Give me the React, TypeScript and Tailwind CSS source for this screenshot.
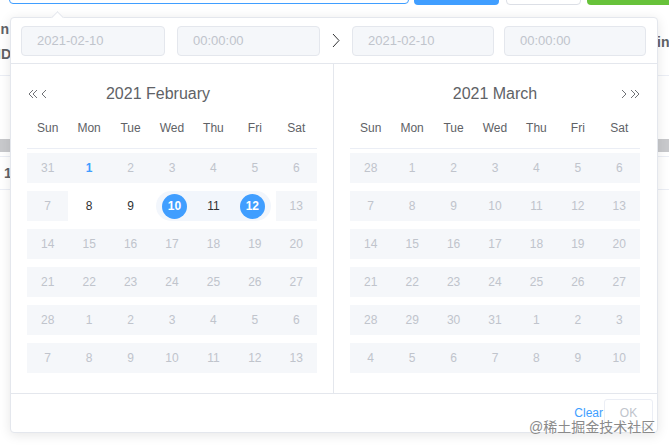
import React from "react";

type Kind = "off" | "normal" | "today" | "start" | "end" | "range";

interface Cell {
    d: number;
    kind: Kind;
}

const WEEK = ["Sun", "Mon", "Tue", "Wed", "Thu", "Fri", "Sat"];

const off = (nums: number[]): Cell[] => nums.map((d) => ({ d, kind: "off" as Kind }));

const FEB: Cell[] = [
    { d: 31, kind: "off" },
    { d: 1, kind: "today" },
    ...off([2, 3, 4, 5, 6]),
    { d: 7, kind: "off" },
    { d: 8, kind: "normal" },
    { d: 9, kind: "normal" },
    { d: 10, kind: "start" },
    { d: 11, kind: "range" },
    { d: 12, kind: "end" },
    { d: 13, kind: "off" },
    ...off([14, 15, 16, 17, 18, 19, 20]),
    ...off([21, 22, 23, 24, 25, 26, 27]),
    ...off([28, 1, 2, 3, 4, 5, 6]),
    ...off([7, 8, 9, 10, 11, 12, 13]),
];

const MAR: Cell[] = [
    ...off([28, 1, 2, 3, 4, 5, 6]),
    ...off([7, 8, 9, 10, 11, 12, 13]),
    ...off([14, 15, 16, 17, 18, 19, 20]),
    ...off([21, 22, 23, 24, 25, 26, 27]),
    ...off([28, 29, 30, 31, 1, 2, 3]),
    ...off([4, 5, 6, 7, 8, 9, 10]),
];

function DoubleChevron({ dir }: { dir: "left" | "right" }) {
    return (
        <svg width="10" height="10" viewBox="0 0 10 10" className={dir === "right" ? "rotate-180" : ""}>
            <path d="M5 1 L1 5 L5 9 M9 1 L5 5 L9 9" fill="none" stroke="#606266" strokeWidth="0.9" />
        </svg>
    );
}

function Chevron({ dir }: { dir: "left" | "right" }) {
    return (
        <svg width="6" height="10" viewBox="0 0 6 10" className={dir === "right" ? "rotate-180" : ""}>
            <path d="M5 1 L1 5 L5 9" fill="none" stroke="#606266" strokeWidth="0.9" />
        </svg>
    );
}

function DayCell({ cell }: { cell: Cell }) {
    const { d, kind } = cell;
    let box = "h-[30px] flex items-center justify-center";
    if (kind === "off" || kind === "today") box += " bg-[#f5f7fa]";
    if (kind === "range") box += " bg-[#f2f6fc]";
    if (kind === "start") box += " bg-[#f2f6fc] ml-[5px] rounded-l-[15px]";
    if (kind === "end") box += " bg-[#f2f6fc] mr-[5px] rounded-r-[15px]";

    let text = "text-[#c0c4cc]";
    if (kind === "normal" || kind === "range") text = "text-[#303133]";
    if (kind === "today") text = "text-[#409eff] font-bold";

    return (
        <div className="h-[38px] py-[4px]">
            <div className={box}>
                {kind === "start" || kind === "end" ? (
                    <span className="flex h-[25px] w-[25px] items-center justify-center rounded-full bg-[#409eff] text-white font-bold">
                        {d}
                    </span>
                ) : (
                    <span className={text}>{d}</span>
                )}
            </div>
        </div>
    );
}

function Month({ title, cells, side }: { title: string; cells: Cell[]; side: "left" | "right" }) {
    const isLeft = side === "left";
    return (
        <div className={`px-[16px] pt-[16px] pb-[16px] ${isLeft ? "w-[323px] border-r border-[#e4e7ed]" : "w-[322px]"}`}>
            <div className="relative flex h-[28px] items-center justify-center text-[16px] text-[#606266]">
                {isLeft && (
                    <div className="absolute left-[1px] flex items-center gap-[3px]">
                        <DoubleChevron dir="left" />
                        <Chevron dir="left" />
                    </div>
                )}
                <span className={isLeft ? "mr-[28px]" : ""}>{title}</span>
                {!isLeft && (
                    <div className="absolute right-0 flex items-center gap-[3px]">
                        <Chevron dir="right" />
                        <DoubleChevron dir="right" />
                    </div>
                )}
            </div>
            <div className="mt-[2px] w-[290px] text-[12px]">
                <div className="grid h-[39px] grid-cols-7 border-b border-[#ebeef5] pb-[2px] text-[#606266]">
                    {WEEK.map((w) => (
                        <div key={w} className="flex items-center justify-center">
                            {w}
                        </div>
                    ))}
                </div>
                <div className="grid grid-cols-7">
                    {cells.map((c, i) => (
                        <DayCell key={i} cell={c} />
                    ))}
                </div>
            </div>
        </div>
    );
}

function TimeInput({ value, w }: { value: string; w: string }) {
    return (
        <div className={`flex h-[30px] items-center rounded-[4px] border border-[#e4e7ed] bg-[#f5f7fa] pl-[15px] text-[13px] text-[#c0c4cc] ${w}`}>
            {value}
        </div>
    );
}

function Backdrop() {
    return (
        <div className="flex flex-col">
            {/* toolbar, only its lower edge shows */}
            <div className="-mt-[28px] flex h-[33px] items-start">
                <div className="ml-[9px] h-[32px] w-[400px] rounded-[4px] border border-[#409eff]" />
                <div className="ml-[5px] h-[33px] w-[85px] rounded-[4px] bg-[#409eff]" />
                <div className="ml-[7px] h-[33px] w-[75px] rounded-[4px] border border-[#dcdfe6]" />
                <div className="ml-[6px] h-[33px] flex-1 rounded-l-[4px] bg-[#67c23a]" />
            </div>
            <div className="flex h-[71px] border-b border-[#ebeef5] text-[14px] font-bold text-[#606266]">
                <div className="w-[11px] overflow-hidden">
                    <div className="mt-[14px] flex w-[60px] -translate-x-[51px] justify-end">Admin</div>
                    <div className="mt-[4px] flex w-[60px] -translate-x-[49px] justify-end">ID</div>
                </div>
                <div className="flex-1" />
                <div className="w-[12px] overflow-hidden pt-[27px]">in</div>
            </div>
            <div className="h-[63px]" />
            <div className="h-[13px] bg-[#c8c9cc]" />
            <div className="h-[5px] border-b border-[#ebeef5]" />
            <div className="flex h-[33px] items-center border-b border-[#ebeef5] pl-[4px] text-[14px] font-bold text-[#606266]">
                1
            </div>
        </div>
    );
}

export default function App() {
    return (
        <div
            className="relative h-[448px] w-[669px] overflow-hidden bg-white"
            style={{ fontFamily: '"Liberation Sans", Arial, "Noto Sans CJK SC", sans-serif' }}
        >
            <Backdrop />

            {/* date range popup */}
            <div className="absolute left-[10px] top-[17px] w-[648px] rounded-[4px] border border-[#e4e7ed] bg-white shadow-[0_2px_12px_rgba(0,0,0,0.1)]">
                <div className="absolute -top-[5px] left-[42px] h-[9px] w-[9px] rotate-45 border-l border-t border-[#e4e7ed] bg-white" />

                <div className="flex h-[46px] items-center border-b border-[#e4e7ed] pl-[10px]">
                    <TimeInput value="2021-02-10" w="w-[144px]" />
                    <div className="ml-[12px]">
                        <TimeInput value="00:00:00" w="w-[143px]" />
                    </div>
                    <div className="flex w-[32px] items-center justify-center">
                        <svg width="8" height="15" viewBox="0 0 8 15">
                            <path d="M1 1 L7 7.5 L1 14" fill="none" stroke="#303133" strokeWidth="1" />
                        </svg>
                    </div>
                    <TimeInput value="2021-02-10" w="w-[142px]" />
                    <div className="ml-[10px]">
                        <TimeInput value="00:00:00" w="w-[142px]" />
                    </div>
                </div>

                <div className="flex">
                    <Month title="2021 February" cells={FEB} side="left" />
                    <Month title="2021 March" cells={MAR} side="right" />
                </div>

                <div className="flex h-[39px] items-center justify-end border-t border-[#e4e7ed] pr-[4px] text-[12px]">
                    <span className="text-[#409eff]">Clear</span>
                    <div className="ml-[1px] flex h-[29px] w-[49px] items-center justify-center rounded-[3px] border border-[#ebeef5] text-[#c0c4cc]">
                        OK
                    </div>
                </div>
            </div>

            <div className="absolute left-[529px] top-[418px] text-[14px] leading-[18px] text-[#8a8a8a]">
                @稀土掘金技术社区
            </div>
        </div>
    );
}
